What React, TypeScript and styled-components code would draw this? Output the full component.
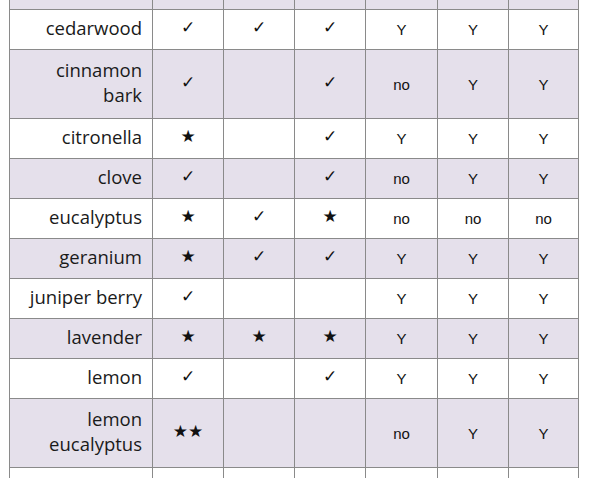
import React from "react";
import styled, { createGlobalStyle } from "styled-components";

const Global = createGlobalStyle`
  html, body { margin: 0; padding: 0; background: #ffffff; overflow: hidden; }
  body { width: 589px; height: 478px; }
`;

const Page = styled.div`
  padding-left: 9px;
  width: 589px;
  height: 478px;
  box-sizing: border-box;
  overflow: hidden;
`;

const Table = styled.table`
  border-collapse: collapse;
  table-layout: fixed;
  width: 570px;
`;

const Row = styled.tr<{ $shade: boolean; $h: number }>`
  background: ${(p) => (p.$shade ? "#e5e0eb" : "#ffffff")};
  height: ${(p) => p.$h}px;
`;

const Cell = styled.td<{ $top?: boolean }>`
  border: 1px solid #8a8a8a;
  ${(p) => (p.$top ? "border-top: none;" : "")}
  padding: 0;
  text-align: center;
  vertical-align: middle;
  color: #111;
`;

const NameCell = styled(Cell)`
  text-align: right;
  padding: 0 10px 4px 0;
  font-family: "Open Sans", Lato, sans-serif;
  font-size: 18.5px;
  line-height: 25px;
  color: #1a1a1a;
`;

const Mark = styled.span`
  font-family: "DejaVu Sans", sans-serif;
  font-size: 17px;
  position: relative;
  top: -2px;
`;

const Answer = styled.span`
  font-family: "Liberation Sans", Arial, sans-serif;
  font-size: 15px;
  position: relative;
  top: 1px;
`;

type R = { name: string[]; marks: string[]; answers: string[] };

const rows: R[] = [
  { name: ["cedarwood"], marks: ["✓", "✓", "✓"], answers: ["Y", "Y", "Y"] },
  { name: ["cinnamon", "bark"], marks: ["✓", "", "✓"], answers: ["no", "Y", "Y"] },
  { name: ["citronella"], marks: ["★", "", "✓"], answers: ["Y", "Y", "Y"] },
  { name: ["clove"], marks: ["✓", "", "✓"], answers: ["no", "Y", "Y"] },
  { name: ["eucalyptus"], marks: ["★", "✓", "★"], answers: ["no", "no", "no"] },
  { name: ["geranium"], marks: ["★", "✓", "✓"], answers: ["Y", "Y", "Y"] },
  { name: ["juniper berry"], marks: ["✓", "", ""], answers: ["Y", "Y", "Y"] },
  { name: ["lavender"], marks: ["★", "★", "★"], answers: ["Y", "Y", "Y"] },
  { name: ["lemon"], marks: ["✓", "", "✓"], answers: ["Y", "Y", "Y"] },
  { name: ["lemon", "eucalyptus"], marks: ["★★", "", ""], answers: ["no", "Y", "Y"] },
];

const widths = [143, 71, 71, 71, 72, 71, 70];

export default function App() {
  return (
    <>
      <Global />
      <Page>
        <Table>
          <colgroup>
            {widths.map((w, i) => (
              <col key={i} style={{ width: w }} />
            ))}
          </colgroup>
          <tbody>
            <Row $shade={true} $h={9}>
              {widths.map((_, i) => (
                <Cell key={i} $top />
              ))}
            </Row>
            {rows.map((r, i) => (
              <Row key={i} $shade={i % 2 === 1} $h={r.name.length > 1 ? 69 : 40}>
                <NameCell>
                  {r.name.map((n, j) => (
                    <div key={j}>{n}</div>
                  ))}
                </NameCell>
                {r.marks.map((m, j) => (
                  <Cell key={j}>
                    <Mark>{m}</Mark>
                  </Cell>
                ))}
                {r.answers.map((a, j) => (
                  <Cell key={j}>
                    <Answer>{a}</Answer>
                  </Cell>
                ))}
              </Row>
            ))}
            <Row $shade={false} $h={40}>
              <NameCell />
              {widths.slice(1).map((_, i) => (
                <Cell key={i} />
              ))}
            </Row>
          </tbody>
        </Table>
      </Page>
    </>
  );
}
